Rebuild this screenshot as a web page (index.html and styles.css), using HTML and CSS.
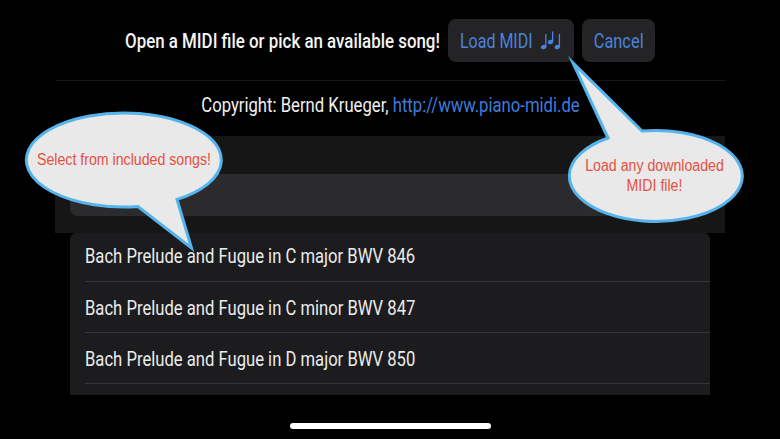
FILE: index.html
```html
<!DOCTYPE html>
<html lang="en">
<head>
<meta charset="utf-8">
<title>Load MIDI</title>
<link rel="stylesheet" href="styles.css">
</head>
<body>
<main class="screen">
  <header class="toolbar">
    <h1 class="prompt"><span class="prompt-text">Open a MIDI file or pick an available song!</span></h1>
    <button class="btn btn-load"><span class="load-label">Load MIDI</span>
      <svg class="notes" viewBox="0 0 20 19" width="20" height="19" aria-hidden="true">
        <g fill="#4a83dc">
          <ellipse cx="2.7" cy="16" rx="2.7" ry="2.2" transform="rotate(-20 2.7 16)"/>
          <ellipse cx="9.5" cy="11" rx="2.7" ry="2.2" transform="rotate(-20 9.5 11)"/>
          <ellipse cx="16.3" cy="16" rx="2.7" ry="2.2" transform="rotate(-20 16.3 16)"/>
        </g>
        <g stroke="#4a83dc" stroke-width="1.3" fill="none">
          <path d="M4.8 16V3"/>
          <path d="M11.6 11V.5"/>
          <path d="M18.4 16V3"/>
        </g>
      </svg>
    </button>
    <button class="btn btn-cancel"><span class="cancel-label">Cancel</span></button>
  </header>
  <div class="copyright"><span class="copyright-text">Copyright: Bernd Krueger, <a class="link" href="#">http://www.piano-midi.de</a></span></div>
  <section class="panel">
    <div class="field"></div>
  </section>
  <ul class="songs">
    <li class="song"><span class="song-text">Bach Prelude and Fugue in C major BWV 846</span></li>
    <li class="song"><span class="song-text">Bach Prelude and Fugue in C minor BWV 847</span></li>
    <li class="song"><span class="song-text">Bach Prelude and Fugue in D major BWV 850</span></li>
  </ul>
  <div class="home"></div>

  <svg class="balloons" viewBox="0 0 780 439" width="780" height="439" aria-hidden="true">
    <path class="balloon" d="M138 206.5 A97.5 47 0 1 1 177 199.4 L191.5 248 Z"/>
    <path class="balloon" d="M642 131 A86.5 45.5 0 1 1 608 138 L573 63 Z"/>
  </svg>
  <p class="tip tip-left">Select from included songs!</p>
  <p class="tip tip-right">Load any downloaded<br>MIDI file!</p>
</main>
</body>
</html>
```
FILE: styles.css
```css
* { box-sizing: border-box; }
html, body { margin: 0; padding: 0; background: #000; }
.screen {
  position: relative;
  width: 780px;
  height: 439px;
  overflow: hidden;
  background: #000;
  font-family: Roboto, "Liberation Sans", sans-serif;
  color: #f2f2f2;
  padding-top: 19px;
}
.toolbar {
  display: flex;
  align-items: center;
  height: 43px;
  padding-left: 125px;
  gap: 8px;
}
.prompt {
  margin: 2px 0 0;
  width: 315px;
  font-size: 19.5px;
  font-weight: 500;
  color: #f5f5f5;
  white-space: nowrap;
}
.prompt-text {
  display: block;
  transform-origin: left center;
  transform: scaleX(.866);
}
.btn {
  height: 43px;
  border: 0;
  border-radius: 8px;
  background: #242427;
  color: #4a83dc;
  font-family: inherit;
  font-size: 19.5px;
  display: flex;
  align-items: center;
  padding: 2px 0 0;
  white-space: nowrap;
}
.btn-load { width: 126px; padding-left: 12px; gap: 9px; }
.load-label {
  display: block;
  width: 72px;
  transform-origin: left center;
  transform: scaleX(.82);
}
.notes { margin-top: -2px; }
.btn-cancel { width: 73px; justify-content: center; }
.cancel-label { display: block; transform: scaleX(.84); }
.copyright {
  margin: 18px 55px 0 56px;
  border-top: 1px solid #161617;
  height: 56px;
  padding-top: 13px;
  text-align: center;
  font-size: 19.5px;
  line-height: 24px;
  color: #f0f0f0;
  white-space: nowrap;
}
.copyright-text { display: block; transform: scaleX(.855); }
.link { color: #3f7ddc; text-decoration: none; }
.panel {
  margin: 0 55px;
  height: 97px;
  background: #161617;
  padding: 38px 15px 0;
  overflow: hidden;
}
.field {
  height: 42px;
  border-radius: 0 0 8px 8px;
  background: #2b2b2d;
}
.songs {
  list-style: none;
  margin: 0 70px;
  padding: 0 0 0 15px;
  height: 162px;
  background: #1c1c1e;
  border-radius: 6px 6px 0 0;
  overflow: hidden;
}
.song {
  height: 51.2px;
  display: flex;
  align-items: center;
  padding-top: 2px;
  font-size: 19.5px;
  color: #ececec;
  border-bottom: 1px solid #363638;
  white-space: nowrap;
}
.song:first-child { height: 49px; padding-top: 0; padding-bottom: 1px; }
.song-text {
  display: block;
  transform-origin: left center;
  transform: scaleX(.853);
}
.home {
  position: absolute;
  left: 290px;
  top: 423px;
  width: 201px;
  height: 6px;
  border-radius: 3px;
  background: #fff;
}
.balloons { position: absolute; left: 0; top: 0; }
.balloon {
  fill: #e9e9ea;
  stroke: #56b4ec;
  stroke-width: 3;
  stroke-miterlimit: 12;
}
.tip {
  position: absolute;
  margin: 0;
  font-family: "Liberation Sans", Arial, sans-serif;
  font-size: 16px;
  line-height: 20px;
  color: #e5503f;
  text-align: center;
  white-space: nowrap;
  transform: scaleX(.885);
}
.tip-left { left: 24px; width: 200px; top: 150px; }
.tip-right { left: 567px; width: 175px; top: 156px; }
```
